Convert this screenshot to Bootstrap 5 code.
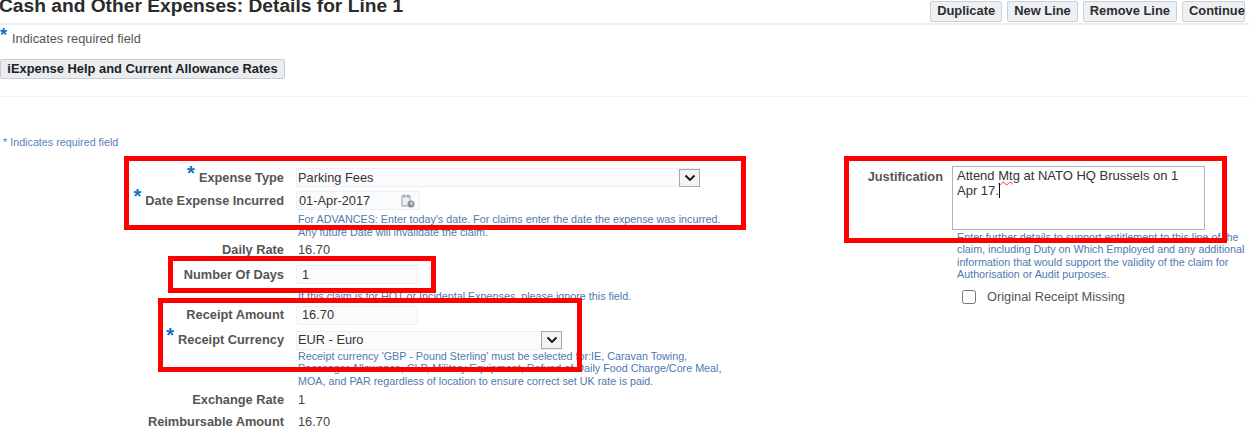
<!DOCTYPE html>
<html lang="en">
<head>
<meta charset="utf-8">
<title>Cash and Other Expenses</title>
<link rel="stylesheet" href="https://cdn.jsdelivr.net/npm/bootstrap@5.3.0/dist/css/bootstrap.min.css">
<style>
html,body{height:435px;overflow:hidden;background:#fff}
body{font-family:"Liberation Sans",Arial,sans-serif;font-size:12.8px;color:#3c3c3c;position:relative}
.head-bar{height:25px;border-bottom:2px solid #eaeef1;overflow:visible}
.page-title{font-size:19.2px;font-weight:700;line-height:18px;margin:-3px 0 0 -1px;color:#2b2b2b;letter-spacing:0}
.act-btn{font-family:inherit;font-size:12.9px;font-weight:700;line-height:1;height:21px;padding:0 6px;border:1px solid #c9d1d8;border-radius:2px;background:#eef1f3;color:#2d2d2d;white-space:nowrap}
.act-last{padding:0 0 0 6px;width:63px;text-align:left}
.act-group{margin:1px 4px 0 0;gap:5px}
.req-line{height:26px;padding-top:2px;color:#555}
.req-star{color:#0a72c9;font-weight:700;font-size:18px;line-height:10px;align-self:flex-start;margin-top:3px;width:12px}
.help-btn{height:20px;width:285px;margin-top:8px;padding:0;font-family:inherit;font-size:12.9px;font-weight:700;line-height:1;border:1px solid #c4ced6;border-radius:2px;background:#e9edf0;color:#222;white-space:nowrap}
.dot-rule{border-top:1px dotted #e3e6e8;margin-top:17px}
.req-small{font-size:10.75px;line-height:12px;color:#5a82b5;margin:39px 0 0 3px}
.form-zone{margin-top:18px}
.left-col{width:800px}
.right-col{width:449px}
.frow{display:grid;grid-template-columns:284px 1fr;column-gap:12px;align-items:center;height:23px}
.frow-b{height:25px}
.frow-s{height:22px}
.flabel{font-weight:700;text-align:right;color:#555;white-space:nowrap}
.star{color:#0a72c9;font-size:20px;font-weight:700;line-height:0;position:relative;top:-2px;margin-right:4px}
.fvalue{padding-left:2px;color:#444}
.hint{font-size:10.75px;line-height:12.5px;color:#4e79b0;margin-left:298px;white-space:nowrap}
.hint-a{margin-top:1px;margin-bottom:-1px}
.hint-d{margin-top:3px}
.hint-c{margin-top:-3px;margin-bottom:1px}
.sel-box{display:flex;width:404px;height:19px;background:#fafbfd;border:1px solid #edf0f2;align-items:center;padding-left:1px;color:#333}
.sel-box.narrow{width:266px}
.sel-text{flex:1}
.sel-arrow{width:21px;height:18px;margin-right:-1px;border:1px solid #a9a9a9;background:#f3f3f3;display:flex;align-items:center;justify-content:center}
.tbox{height:19px;border:1px solid #edf0f2;border-radius:2px;background:#fafbfd;padding:0 5px;font-family:inherit;font-size:12.8px;color:#333;box-shadow:none}
.tbox.short{width:122px}
.tbox.date{width:124px;display:flex;align-items:center;justify-content:space-between;padding:0 3px 0 2px}
.just-row{display:grid;grid-template-columns:143px 253px;column-gap:9px}
.just-label{font-weight:700;color:#555;text-align:right;line-height:14px;padding-top:4px}
.just-area{height:64px;border:1px solid #a9b4c6;padding:2px 10px 2px 4px;line-height:14.5px;color:#333;font-size:13px}
.squig{text-decoration:underline wavy #e04040 1px}
.caret-mark{border-right:1px solid #111}
.just-hint{font-size:10.75px;line-height:12.3px;color:#4e79b0;margin:1px 0 0 157px;white-space:nowrap}
.orig-row{margin:7px 0 0 162px;gap:11px}
.orig-box{width:14px;height:14px;margin:0;border:1px solid #8a8a8a;border-radius:1px;background:#fff}
.orig-text{color:#555}
.redbox{position:absolute;border:5px solid #f00;pointer-events:none}
.rb1{left:124px;top:156px;width:622px;height:74px}
.rb2{left:168px;top:256px;width:268px;height:37px}
.rb3{left:158px;top:298px;width:424px;height:74px}
.rb4{left:844px;top:156px;width:383px;height:87px}
</style>
</head>
<body>
<header class="head-bar d-flex justify-content-between align-items-start">
  <h1 class="page-title">Cash and Other Expenses: Details for Line 1</h1>
  <div class="act-group d-flex">
    <button type="button" class="act-btn">Duplicate</button>
    <button type="button" class="act-btn">New Line</button>
    <button type="button" class="act-btn">Remove Line</button>
    <button type="button" class="act-btn act-last">Continue</button>
  </div>
</header>
<div class="req-line d-flex align-items-center"><span class="req-star">*</span><span>Indicates required field</span></div>
<button type="button" class="help-btn d-block">iExpense Help and Current Allowance Rates</button>
<div class="dot-rule"></div>
<p class="req-small">* Indicates required field</p>
<main class="form-zone d-flex">
  <section class="left-col">
    <div class="frow"><div class="flabel"><span class="star">*</span>Expense Type</div>
      <div class="sel-box"><span class="sel-text">Parking Fees</span><span class="sel-arrow"><svg width="12" height="8" viewBox="0 0 12 8"><path d="M1.5 1.5 6 6l4.5-4.5" fill="none" stroke="#111" stroke-width="1.8"/></svg></span></div></div>
    <div class="frow"><div class="flabel"><span class="star">*</span>Date Expense Incurred</div>
      <div class="tbox date"><span>01-Apr-2017</span><svg width="16" height="16" viewBox="0 0 16 16"><rect x="2" y="3" width="8" height="10" fill="#eef0f0" stroke="#9aa0a3"/><path d="M4 1.500v3M8 1.500v3" stroke="#7d8488"/><circle cx="11" cy="11" r="3.500" fill="#8d9497"/><path d="M11 9v2h2" stroke="#fff" fill="none"/></svg></div></div>
    <div class="hint hint-a">For ADVANCES: Enter today's date. For claims enter the date the expense was incurred.<br>Any future Date will invalidate the claim.</div>
    <div class="frow frow-b"><div class="flabel">Daily Rate</div><div class="fvalue">16.70</div></div>
    <div class="frow frow-b"><div class="flabel">Number Of Days</div><input class="tbox short" value="1" aria-label="Number Of Days"></div>
    <div class="hint hint-d">If this claim is for HOT or Incidental Expenses, please ignore this field.</div>
    <div class="frow frow-b"><div class="flabel">Receipt Amount</div><input class="tbox short" value="16.70" aria-label="Receipt Amount"></div>
    <div class="frow frow-b"><div class="flabel"><span class="star">*</span>Receipt Currency</div>
      <div class="sel-box narrow"><span class="sel-text">EUR - Euro</span><span class="sel-arrow"><svg width="12" height="8" viewBox="0 0 12 8"><path d="M1.5 1.5 6 6l4.5-4.5" fill="none" stroke="#111" stroke-width="1.8"/></svg></span></div></div>
    <div class="hint hint-c">Receipt currency 'GBP - Pound Sterling' must be selected for:IE, Caravan Towing,<br>Passenger Allowance, CLP, Military Equipment, Refund of Daily Food Charge/Core Meal,<br>MOA, and PAR regardless of location to ensure correct set UK rate is paid.</div>
    <div class="frow"><div class="flabel">Exchange Rate</div><div class="fvalue">1</div></div>
    <div class="frow frow-s"><div class="flabel">Reimbursable Amount</div><div class="fvalue">16.70</div></div>
  </section>
  <section class="right-col">
    <div class="just-row"><div class="just-label">Justification</div>
      <div class="just-area">Attend <span class="squig">Mtg</span> at NATO HQ Brussels on 1 Apr 17.<span class="caret-mark"></span></div></div>
    <div class="just-hint">Enter further details to support entitlement to this line of the<br>claim, including Duty on Which Employed and any additional<br>information that would support the validity of the claim for<br>Authorisation or Audit purposes.</div>
    <label class="orig-row d-flex align-items-center"><input type="checkbox" class="orig-box"><span class="orig-text">Original Receipt Missing</span></label>
  </section>
</main>
<div class="redbox rb1"></div><div class="redbox rb2"></div><div class="redbox rb3"></div><div class="redbox rb4"></div>
</body>
</html>
